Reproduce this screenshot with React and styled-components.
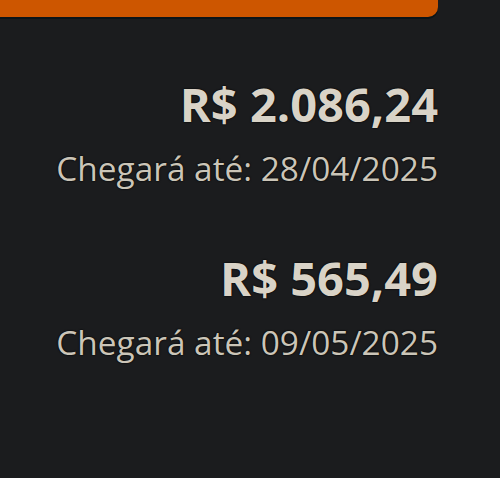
import React from 'react';
import styled, { createGlobalStyle } from 'styled-components';

const Global = createGlobalStyle`
  html, body {
    margin: 0;
    background: #1b1c1e;
  }
`;

const Page = styled.div`
  width: 500px;
  height: 478px;
  background: #1b1c1e;
  font-family: 'Open Sans', 'Noto Sans', sans-serif;
  padding-right: 62px;
  box-sizing: border-box;
  overflow: hidden;
`;

const OrangeBar = styled.div`
  height: 17px;
  background: #cd5600;
  border-radius: 0 0 10px 0;
  box-shadow: 0 2px 0 #0b1418;
`;

const List = styled.div`
  display: flex;
  flex-direction: column;
  align-items: flex-end;
  gap: 62px;
  margin-top: 59px;
`;

const Item = styled.div`
  display: flex;
  flex-direction: column;
  align-items: flex-end;
  gap: 16px;
  text-shadow: 0 0 2px #000, 0 0 1px #000;
`;

const Price = styled.div`
  color: #d9d3c7;
  font-size: 47px;
  font-weight: 700;
  line-height: 56px;
`;

const Arrival = styled.div`
  color: #cbc5b8;
  font-size: 33.4px;
  line-height: 40px;
`;

const orders = [
  { price: 'R$ 2.086,24', date: '28/04/2025' },
  { price: 'R$ 565,49', date: '09/05/2025' },
];

export default function App() {
  return (
    <>
      <Global />
      <Page>
        <OrangeBar />
        <List>
          {orders.map((o) => (
            <Item key={o.price}>
              <Price>{o.price}</Price>
              <Arrival>Chegará até: {o.date}</Arrival>
            </Item>
          ))}
        </List>
      </Page>
    </>
  );
}
